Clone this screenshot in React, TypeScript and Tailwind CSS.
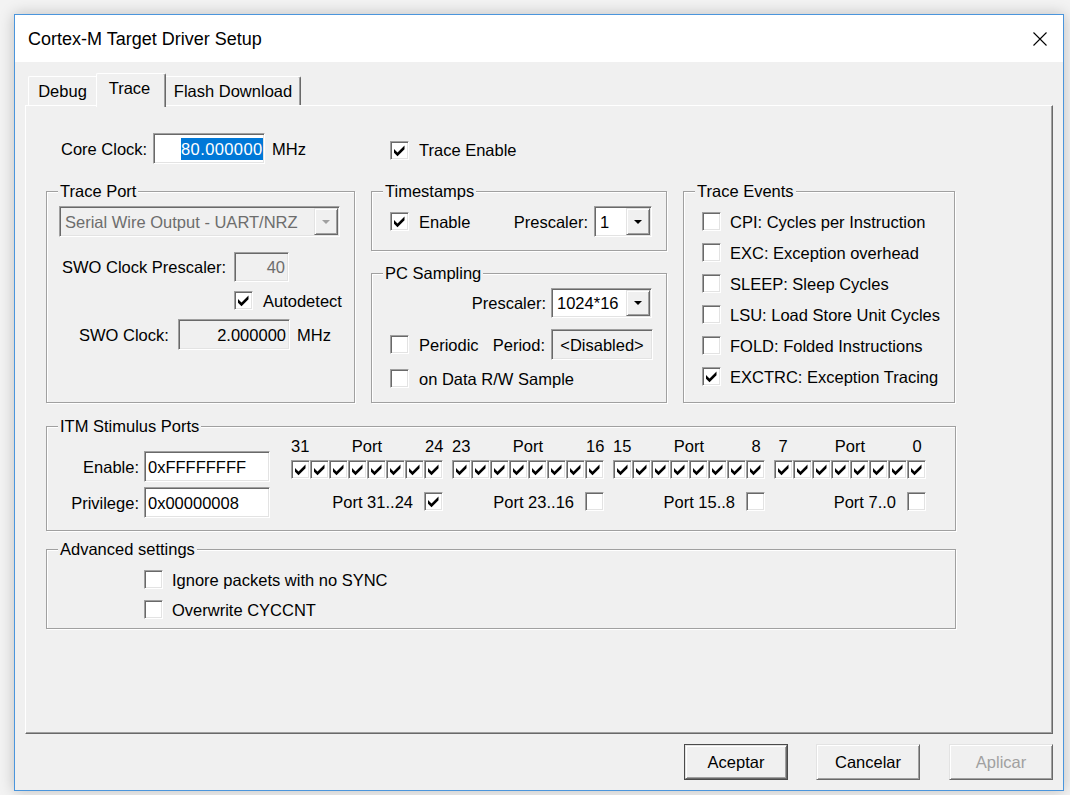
import React from "react";

// Classic Win32 3D edges
const sunken =
  "border border-t-[#a0a0a0] border-l-[#a0a0a0] border-r-white border-b-white shadow-[inset_1px_1px_0_#696969,inset_-1px_-1px_0_#e3e3e3]";
const raised =
  "border border-t-[#e3e3e3] border-l-[#e3e3e3] border-r-[#696969] border-b-[#696969] shadow-[inset_1px_1px_0_#ffffff,inset_-1px_-1px_0_#a0a0a0]";

function CheckBox({ checked = false }: { checked?: boolean }) {
  return (
    <div className={`w-[19px] h-[19px] shrink-0 bg-white ${sunken}`}>
      {checked && (
        <svg width="17" height="17" viewBox="0 0 17 17" className="block">
          <path d="M3 7L6.5 10.5L13.5 3.5V7.2L6.5 14.2L3 10.7Z" fill="#000" />
        </svg>
      )}
    </div>
  );
}

function Labeled({
  checked = false,
  label,
  gap = "ml-[10px]",
}: {
  checked?: boolean;
  label: string;
  gap?: string;
}) {
  return (
    <div className="flex items-center">
      <CheckBox checked={checked} />
      <span className={`${gap} whitespace-nowrap`}>{label}</span>
    </div>
  );
}

function Arrow({ disabled = false }: { disabled?: boolean }) {
  return (
    <svg width="8" height="4" viewBox="0 0 8 4" className="block">
      <path d="M0 0H8L4 4Z" fill={disabled ? "#a0a0a0" : "#000"} />
    </svg>
  );
}

function Combo({
  value,
  width,
  disabled = false,
  h = "h-[31px]",
}: {
  value: string;
  width: string;
  disabled?: boolean;
  h?: string;
}) {
  return (
    <div
      className={`${width} ${h} shrink-0 flex items-stretch ${sunken} ${
        disabled ? "bg-[#f0f0f0] text-[#6d6d6d]" : "bg-white"
      }`}
    >
      <span className="flex-1 flex items-center pl-[5px] whitespace-nowrap overflow-hidden">{value}</span>
      <div
        className={`w-[24px] my-[1px] mr-[1px] flex items-center justify-center bg-[#f0f0f0] ${raised}`}
      >
        <Arrow disabled={disabled} />
      </div>
    </div>
  );
}

function Group({
  title,
  className,
  children,
}: {
  title: string;
  className: string;
  children?: React.ReactNode;
}) {
  return (
    <div
      className={`relative shrink-0 flex flex-col border border-[#a0a0a0] shadow-[inset_1px_1px_0_#ffffff,1px_1px_0_#ffffff] ${className}`}
    >
      <span className="absolute left-[11px] top-[-10px] px-[2px] bg-[#f0f0f0] leading-[18px] whitespace-nowrap">
        {title}
      </span>
      {children}
    </div>
  );
}

const traceEvents: [string, boolean][] = [
  ["CPI: Cycles per Instruction", false],
  ["EXC: Exception overhead", false],
  ["SLEEP: Sleep Cycles", false],
  ["LSU: Load Store Unit Cycles", false],
  ["FOLD: Folded Instructions", false],
  ["EXCTRC: Exception Tracing", true],
];

const portGroups = [
  { hi: "31", lo: "24", label: "Port 31..24", all: true },
  { hi: "23", lo: "16", label: "Port 23..16", all: false },
  { hi: "15", lo: "8", label: "Port 15..8", all: false },
  { hi: "7", lo: "0", label: "Port 7..0", all: false },
];

function DialogButton({
  label,
  isDefault = false,
  disabled = false,
  className = "",
}: {
  label: string;
  isDefault?: boolean;
  disabled?: boolean;
  className?: string;
}) {
  return (
    <div
      className={`w-[104px] h-[36px] shrink-0 ${
        isDefault ? "border border-[#4a4a4a]" : ""
      } ${className}`}
    >
      <div
        className={`w-full h-full flex items-center justify-center bg-[#f0f0f0] ${raised} ${
          disabled ? "text-[#a0a0a0]" : ""
        }`}
      >
        {label}
      </div>
    </div>
  );
}

export default function App() {
  return (
    <div className="w-[1070px] h-[795px] overflow-hidden bg-[#f3f3f3] pt-[14px] pl-[14px] font-['Liberation_Sans',Arial,sans-serif] text-[16.5px] leading-[18px] text-black">
      <div className="w-[1050px] h-[777px] border border-[#4a95dc] bg-[#f0f0f0] flex flex-col shadow-[0_0_14px_rgba(0,0,0,0.22)]">
        {/* title bar */}
        <div className="h-[47px] shrink-0 bg-white flex items-center pl-[13px] pr-[16px]">
          <span className="text-[18px] leading-[22px]">Cortex-M Target Driver Setup</span>
          <svg width="14" height="14" viewBox="0 0 14 14" className="ml-auto">
            <path d="M0.5 0.5L13.5 13.5M13.5 0.5L0.5 13.5" stroke="#000" strokeWidth="1.1" />
          </svg>
        </div>

        {/* client area */}
        <div className="flex-1 flex flex-col">
          {/* tabs */}
          <div className="mt-[11px] flex items-end pl-[13px]">
            <div className="w-[68px] h-[29px] flex justify-center pt-[5px] border-l border-t border-white rounded-tl-[2px]">
              Debug
            </div>
            <div className="relative z-10 w-[70px] h-[34px] -mb-[2px] flex justify-center pt-[5px] pr-[3px] bg-[#f0f0f0] border-l border-t border-r border-l-white border-t-white border-r-[#696969] shadow-[inset_-1px_0_0_#a0a0a0] rounded-t-[2px]">
              Trace
            </div>
            <div className="w-[135px] h-[29px] flex justify-center pt-[5px] border-t border-r border-t-white border-r-[#696969] shadow-[inset_-1px_0_0_#a0a0a0] rounded-tr-[2px]">
              Flash Download
            </div>
          </div>

          {/* tab page */}
          <div className="ml-[10px] w-[1028px] h-[629px] shrink-0 flex flex-col border border-t-white border-l-white border-r-[#696969] border-b-[#696969] shadow-[inset_-1px_-1px_0_#a0a0a0]">
            {/* core clock row */}
            <div className="mt-[27px] h-[31px] flex items-center">
              <div className="w-[345px] flex items-center pl-[35px]">
                <span className="w-[92px]">Core Clock:</span>
                <div className={`w-[112px] h-[31px] bg-white flex items-center pl-[27px] pr-[1px] ${sunken}`}>
                  <span className="flex-1 h-[22px] bg-[#0078d7] text-white flex items-center overflow-hidden whitespace-nowrap tracking-[0.4px]">
                    80.000000
                  </span>
                </div>
                <span className="ml-[7px]">MHz</span>
              </div>
              <div className="pl-[19px] mt-[3px]">
                <Labeled checked label="Trace Enable" />
              </div>
            </div>

            {/* group row */}
            <div className="mt-[27px] pl-[20px] flex items-start">
              <Group title="Trace Port" className="w-[309px] h-[212px]">
                <div className="mt-[14px] ml-[12px]">
                  <Combo value="Serial Wire Output - UART/NRZ" width="w-[281px]" disabled />
                </div>
                <div className="mt-[15px] ml-[15px] flex items-center">
                  <span className="w-[172px]">SWO Clock Prescaler:</span>
                  <div className={`w-[55px] h-[30px] bg-[#f0f0f0] text-[#6d6d6d] flex items-center justify-end pr-[3px] ${sunken}`}>
                    40
                  </div>
                </div>
                <div className="mt-[9px] ml-[187px]">
                  <Labeled checked label="Autodetect" gap="ml-[10px]" />
                </div>
                <div className="mt-[9px] ml-[32px] flex items-center">
                  <span className="w-[99px]">SWO Clock:</span>
                  <div className={`w-[112px] h-[31px] bg-[#f0f0f0] flex items-center justify-end pr-[3px] ${sunken}`}>
                    2.000000
                  </div>
                  <span className="ml-[7px]">MHz</span>
                </div>
              </Group>

              <div className="ml-[16px] w-[296px] flex flex-col">
                <Group title="Timestamps" className="w-[296px] h-[60px]">
                  <div className="mt-[14px] h-[31px] flex items-center pl-[18px] pr-[14px]">
                    <Labeled checked label="Enable" />
                    <span className="ml-auto mr-[6px]">Prescaler:</span>
                    <Combo value="1" width="w-[58px]" />
                  </div>
                </Group>
                <Group title="PC Sampling" className="mt-[22px] w-[296px] h-[130px]">
                  <div className="mt-[14px] flex items-center justify-end pr-[14px]">
                    <span className="mr-[5px]">Prescaler:</span>
                    <Combo value="1024*16" width="w-[101px]" h="h-[30px]" />
                  </div>
                  <div className="mt-[11px] h-[31px] flex items-center pl-[18px] pr-[13px]">
                    <Labeled label="Periodic" />
                    <span className="ml-auto mr-[6px]">Period:</span>
                    <div className={`w-[102px] h-[31px] bg-[#f0f0f0] flex items-center justify-center ${sunken}`}>
                      &lt;Disabled&gt;
                    </div>
                  </div>
                  <div className="mt-[9px] pl-[18px]">
                    <Labeled label="on Data R/W Sample" />
                  </div>
                </Group>
              </div>

              <Group title="Trace Events" className="ml-[16px] w-[272px] h-[212px]">
                <div className="mt-[20px] pl-[18px] flex flex-col gap-[12px]">
                  {traceEvents.map(([label, on]) => (
                    <Labeled key={label} checked={on} label={label} gap="ml-[9px]" />
                  ))}
                </div>
              </Group>
            </div>

            {/* ITM stimulus ports */}
            <div className="mt-[23px] pl-[20px]">
              <Group title="ITM Stimulus Ports" className="w-[910px] h-[105px]">
                <div className="flex">
                  <div className="flex flex-col">
                    <div className="mt-[24px] flex items-center">
                      <span className="w-[97px] text-right pr-[5px]">Enable:</span>
                      <div className={`w-[126px] h-[31px] bg-white flex items-center px-[3px] ${sunken}`}>
                        0xFFFFFFFF
                      </div>
                    </div>
                    <div className="mt-[5px] flex items-center">
                      <span className="w-[97px] text-right pr-[5px]">Privilege:</span>
                      <div className={`w-[126px] h-[31px] bg-white flex items-center px-[3px] ${sunken}`}>
                        0x00000008
                      </div>
                    </div>
                  </div>
                  <div className="ml-[21px] flex gap-[9px]">
                    {portGroups.map((g) => (
                      <div key={g.label} className="w-[152px] flex flex-col">
                        <div className="mt-[10px] h-[18px] flex justify-between">
                          <span className="w-[18px] text-center">{g.hi}</span>
                          <span>Port</span>
                          <span className="w-[18px] text-center">{g.lo}</span>
                        </div>
                        <div className="mt-[5px] flex">
                          {Array.from({ length: 8 }).map((_, i) => (
                            <CheckBox key={i} checked />
                          ))}
                        </div>
                        <div className="mt-[13px] flex items-center justify-end">
                          <span className="mr-[11px] whitespace-nowrap">{g.label}</span>
                          <CheckBox checked={g.all} />
                        </div>
                      </div>
                    ))}
                  </div>
                </div>
              </Group>
            </div>

            {/* advanced */}
            <div className="mt-[18px] pl-[20px]">
              <Group title="Advanced settings" className="w-[910px] h-[80px]">
                <div className="mt-[20px] ml-[97px]">
                  <Labeled label="Ignore packets with no SYNC" gap="ml-[9px]" />
                </div>
                <div className="mt-[11px] ml-[97px]">
                  <Labeled label="Overwrite CYCCNT" gap="ml-[9px]" />
                </div>
              </Group>
            </div>
          </div>

          {/* dialog buttons */}
          <div className="mt-[10px] flex">
            <DialogButton label="Aceptar" isDefault className="ml-[669px]" />
            <DialogButton label="Cancelar" className="ml-[28px]" />
            <DialogButton label="Aplicar" disabled className="ml-[29px]" />
          </div>
        </div>
      </div>
    </div>
  );
}
